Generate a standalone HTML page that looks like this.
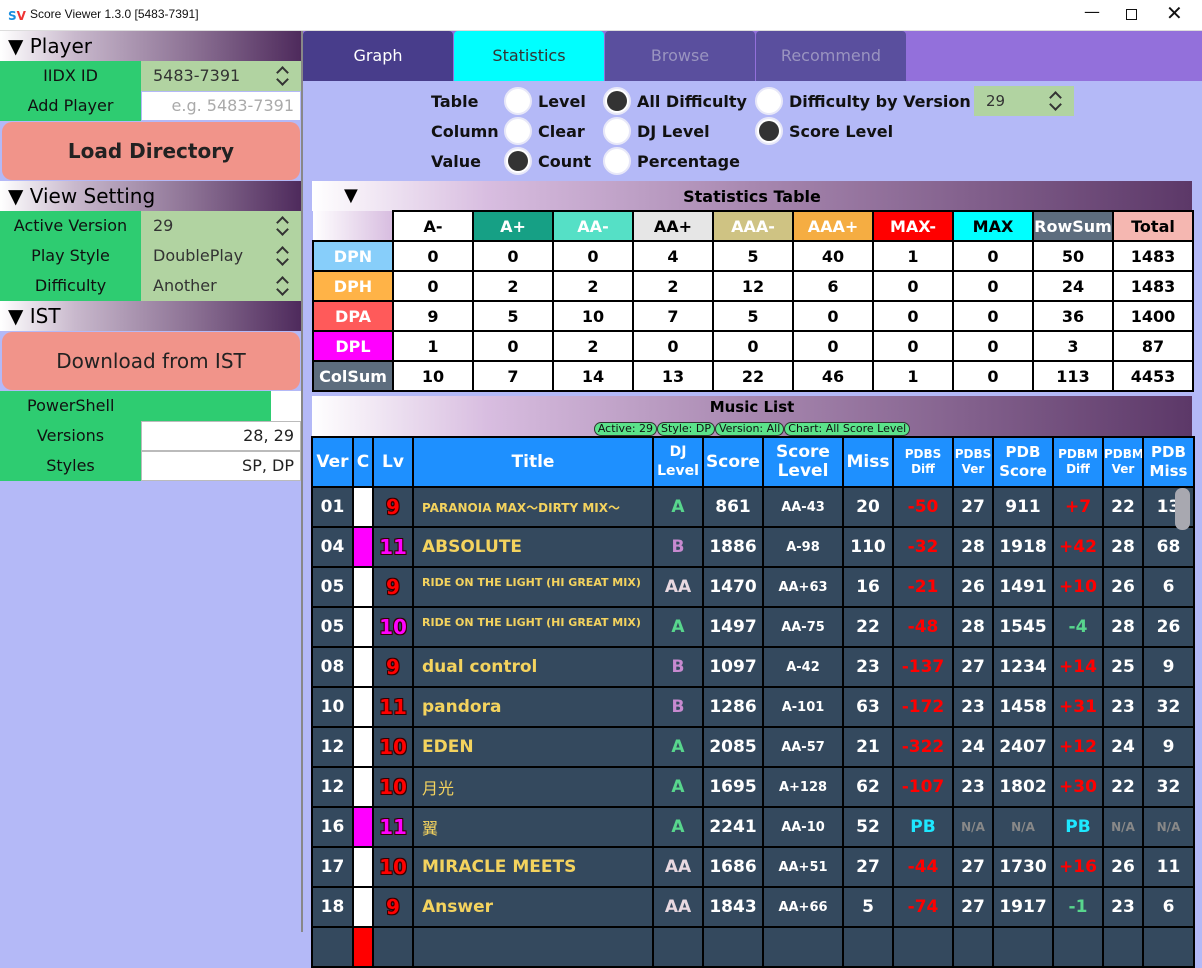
<!DOCTYPE html>
<html><head><meta charset="utf-8"><style>
*{box-sizing:border-box;margin:0;padding:0}
body{width:1202px;height:932px;overflow:hidden;background:#b4b9f7;font-family:"DejaVu Sans","Liberation Sans","Noto Sans CJK JP",sans-serif;position:relative}
.a{position:absolute}
.tb{left:0;top:0;width:1202px;height:31px;background:#fff;border-bottom:1px solid #ddd}
.hd{height:30px;background:linear-gradient(90deg,#fff 0%,#c8b8cc 25%,#8a6f92 65%,#4e2a5c 100%);font-size:20px;line-height:30px;padding-left:8px;color:#000}
.lab{background:#2ecc71;font-size:16px;color:#111;text-align:center;line-height:30px;height:30px}
.val{background:#b1d3a1;font-size:16px;color:#333;line-height:30px;height:30px;padding-left:12px}
.spin{position:absolute;right:12px;top:4px;width:14px;height:22px}
.spin::before,.spin::after{content:"";position:absolute;left:3px;width:7px;height:7px;border-left:2px solid #333;border-top:2px solid #333}
.spin::before{top:3px;transform:rotate(45deg)}
.spin::after{top:10px;transform:rotate(225deg)}
.btn{background:#f1948a;border-radius:10px;text-align:center;color:#222}
.tab{top:31px;height:50px;width:150px;text-align:center;line-height:50px;font-size:16px;border-radius:4px 4px 0 0}
.rl{font-size:16px;font-weight:bold;color:#111}
.rad{width:28px;height:28px;border-radius:50%;background:#fff;border:2px solid #e8e8f8}
.rad.on::after{content:"";position:absolute;left:2px;top:2px;width:20px;height:20px;border-radius:50%;background:#333}
table{border-collapse:collapse;table-layout:fixed}
.st td{border:2px solid #000;height:30px;text-align:center;font-weight:bold;font-size:16px;background:#fff;color:#000;padding:0}
.st .h td{color:#fff}
.ml td{border:2px solid #000;text-align:center;font-weight:bold;font-size:17px;color:#fff;background:#34495e;height:40px;padding:0;white-space:nowrap;overflow:hidden}
.ml tr.h td{background:#1e90ff;height:50px;line-height:19px}
.ml td.t{text-align:left;padding-left:8px;color:#f4d35e}
.ml td.lv{text-shadow:-1px -1px 0 #300,1px -1px 0 #300,-1px 1px 0 #300,1px 1px 0 #300;font-size:20px}
.ml td.r{color:#f00}.ml td.m{color:#f0f}.ml td.g{color:#58d68d}.ml td.p{color:#c88ad0}.ml td.w2{color:#e8d8e0}.ml td.cy{color:#1ee8ff}.ml td.na{color:#888;font-size:12px}
.ml td.sl{font-size:13px}
.chip{display:inline-block;background:#5be38a;border:1px solid #333;border-radius:7px;font-size:11px;line-height:12px;padding:0 3px;color:#111}
</style></head><body>
<div class="a tb">
 <div class="a" style="left:8px;top:7px;width:18px;height:18px;font-size:12px;font-weight:bold;color:#1a8fe0;line-height:18px">S<span style="color:#e33">V</span></div>
 <div class="a" style="left:30px;top:7px;font-size:12px;font-family:'Liberation Sans',sans-serif;color:#111">Score Viewer 1.3.0 [5483-7391]</div>
 <div class="a" style="left:1084px;top:2px;font-size:16px;color:#111">&#8212;</div>
 <div class="a" style="left:1126px;top:9px;width:11px;height:11px;border:1px solid #111"></div>
 <div class="a" style="left:1166px;top:1px;font-size:20px;color:#111">&#10005;</div>
</div>
<div class="a" style="left:301px;top:31px;width:2px;height:901px;background:#888"></div>
<div class="a hd" style="left:0;top:31px;width:301px">&#9660; Player</div>
<div class="a lab" style="left:0;top:61px;width:141px">IIDX ID</div>
<div class="a val" style="left:141px;top:61px;width:160px">5483-7391<div class="spin"></div></div>
<div class="a lab" style="left:0;top:91px;width:141px">Add Player</div>
<div class="a" style="left:142px;top:92px;width:158px;height:28px;background:#fff;font-size:16px;color:#aaa;text-align:right;padding-right:6px;line-height:28px">e.g. 5483-7391</div>
<div class="a btn" style="left:2px;top:122px;width:298px;height:58px;font-size:20px;font-weight:bold;line-height:58px">Load Directory</div>
<div class="a hd" style="left:0;top:181px;width:301px">&#9660; View Setting</div>
<div class="a lab" style="left:0;top:211px;width:141px">Active Version</div>
<div class="a val" style="left:141px;top:211px;width:160px">29<div class="spin"></div></div>
<div class="a lab" style="left:0;top:241px;width:141px">Play Style</div>
<div class="a val" style="left:141px;top:241px;width:160px">DoublePlay<div class="spin"></div></div>
<div class="a lab" style="left:0;top:271px;width:141px">Difficulty</div>
<div class="a val" style="left:141px;top:271px;width:160px">Another<div class="spin"></div></div>
<div class="a hd" style="left:0;top:301px;width:301px">&#9660; IST</div>
<div class="a btn" style="left:2px;top:332px;width:298px;height:58px;font-size:20px;line-height:58px">Download from IST</div>
<div class="a lab" style="left:0;top:391px;width:271px;text-align:left;padding-left:27px">PowerShell</div>
<div class="a" style="left:271px;top:391px;width:30px;height:30px;background:#fff"></div>
<div class="a lab" style="left:0;top:421px;width:141px">Versions</div>
<div class="a" style="left:141px;top:421px;width:160px;height:30px;background:#fff;border:1px solid #bbb;font-size:16px;text-align:right;padding-right:6px;line-height:28px;color:#222">28, 29</div>
<div class="a lab" style="left:0;top:451px;width:141px">Styles</div>
<div class="a" style="left:141px;top:451px;width:160px;height:30px;background:#fff;border:1px solid #bbb;font-size:16px;text-align:right;padding-right:6px;line-height:28px;color:#222">SP, DP</div>
<div class="a" style="left:303px;top:31px;width:899px;height:50px;background:#9370db"></div>
<div class="a tab" style="left:303px;background:#483d8b;color:#fff">Graph</div>
<div class="a tab" style="left:454px;background:#00ffff;color:#333">Statistics</div>
<div class="a tab" style="left:605px;background:#5a4f9e;color:#9a94c0">Browse</div>
<div class="a tab" style="left:756px;background:#5a4f9e;color:#9a94c0">Recommend</div>
<div class="a rl" style="left:431px;top:92px">Table</div>
<div class="a rl" style="left:431px;top:122px">Column</div>
<div class="a rl" style="left:431px;top:152px">Value</div>
<div class="a rad" style="left:504px;top:87px"></div><div class="a rl" style="left:538px;top:92px">Level</div>
<div class="a rad on" style="left:603px;top:87px"></div><div class="a rl" style="left:637px;top:92px">All Difficulty</div>
<div class="a rad" style="left:755px;top:87px"></div><div class="a rl" style="left:789px;top:92px">Difficulty by Version</div>
<div class="a val" style="left:974px;top:86px;width:100px;height:30px;font-size:15px">29<div class="spin"></div></div>
<div class="a rad" style="left:504px;top:117px"></div><div class="a rl" style="left:538px;top:122px">Clear</div>
<div class="a rad" style="left:603px;top:117px"></div><div class="a rl" style="left:637px;top:122px">DJ Level</div>
<div class="a rad on" style="left:755px;top:117px"></div><div class="a rl" style="left:789px;top:122px">Score Level</div>
<div class="a rad on" style="left:504px;top:147px"></div><div class="a rl" style="left:538px;top:152px">Count</div>
<div class="a rad" style="left:603px;top:147px"></div><div class="a rl" style="left:637px;top:152px">Percentage</div>
<div class="a" style="left:312px;top:181px;width:880px;height:30px;background:linear-gradient(90deg,#fff 0%,#d8bde0 20%,#a888b0 50%,#5c3868 100%)">
 <div class="a" style="left:32px;top:4px;font-size:18px">&#9660;</div>
 <div class="a" style="left:0;width:880px;text-align:center;top:6px;font-size:16px;font-weight:bold">Statistics Table</div>
</div>
<table class="a st" style="left:312px;top:210px;width:880px">
<col span="11" style="width:80px">
<tr class="h"><td style="background:linear-gradient(90deg,#fff,#d8bde0);border-top:none;border-left:none"></td><td style="color:#000">A-</td><td style="background:#16a085">A+</td><td style="background:#55e0c6">AA-</td><td style="background:#e6e6e6;color:#000">AA+</td><td style="background:#cfc383">AAA-</td><td style="background:#f5ad42">AAA+</td><td style="background:#f00">MAX-</td><td style="background:#0ff;color:#000">MAX</td><td style="background:#5d6d7e">RowSum</td><td style="background:#f5b7b1;color:#000">Total</td></tr>
<tr><td style="background:#87cefa;color:#fff">DPN</td><td>0</td><td>0</td><td>0</td><td>4</td><td>5</td><td>40</td><td>1</td><td>0</td><td>50</td><td>1483</td></tr>
<tr><td style="background:#ffb347;color:#fff">DPH</td><td>0</td><td>2</td><td>2</td><td>2</td><td>12</td><td>6</td><td>0</td><td>0</td><td>24</td><td>1483</td></tr>
<tr><td style="background:#ff5a5a;color:#fff">DPA</td><td>9</td><td>5</td><td>10</td><td>7</td><td>5</td><td>0</td><td>0</td><td>0</td><td>36</td><td>1400</td></tr>
<tr><td style="background:#f0f;color:#fff">DPL</td><td>1</td><td>0</td><td>2</td><td>0</td><td>0</td><td>0</td><td>0</td><td>0</td><td>3</td><td>87</td></tr>
<tr><td style="background:#5d6d7e;color:#fff">ColSum</td><td>10</td><td>7</td><td>14</td><td>13</td><td>22</td><td>46</td><td>1</td><td>0</td><td>113</td><td>4453</td></tr>
</table>
<div class="a" style="left:312px;top:396px;width:880px;height:41px;background:linear-gradient(90deg,#fff 0%,#d8bde0 20%,#a888b0 50%,#5c3868 100%)">
 <div class="a" style="left:0;width:880px;text-align:center;top:2px;font-size:15px;font-weight:bold">Music List</div>
 <div class="a" style="left:0;width:880px;text-align:center;top:26px;font-size:0"><span class="chip">Active: 29</span><span class="chip">Style: DP</span><span class="chip">Version: All</span><span class="chip">Chart: All Score Level</span></div>
</div>
<table class="a ml" style="left:311px;top:436px;width:882px">
<col style="width:41px"><col style="width:20px"><col style="width:40px"><col style="width:240px"><col style="width:50px"><col style="width:60px"><col style="width:80px"><col style="width:50px"><col style="width:60px"><col style="width:40px"><col style="width:60px"><col style="width:50px"><col style="width:40px"><col style="width:51px">
<tr class="h"><td>Ver</td><td>C</td><td>Lv</td><td>Title</td><td style="font-size:14px">DJ<br>Level</td><td>Score</td><td>Score<br>Level</td><td>Miss</td><td style="font-size:12px;line-height:15px">PDBS<br>Diff</td><td style="font-size:12px;line-height:15px">PDBS<br>Ver</td><td style="font-size:15px">PDB<br>Score</td><td style="font-size:12px;line-height:15px">PDBM<br>Diff</td><td style="font-size:12px;line-height:15px">PDBM<br>Ver</td><td style="font-size:15px">PDB<br>Miss</td></tr>
<tr><td>01</td><td style="background:#fff"></td><td class="lv r">9</td><td class="t" style="font-size:12px">PARANOIA MAX～DIRTY MIX～</td><td class="g">A</td><td>861</td><td class="sl">AA-43</td><td>20</td><td class="r">-50</td><td>27</td><td>911</td><td class="r">+7</td><td>22</td><td>13</td></tr>
<tr><td>04</td><td style="background:#f0f"></td><td class="lv m">11</td><td class="t">ABSOLUTE</td><td class="p">B</td><td>1886</td><td class="sl">A-98</td><td>110</td><td class="r">-32</td><td>28</td><td>1918</td><td class="r">+42</td><td>28</td><td>68</td></tr>
<tr><td>05</td><td style="background:#fff"></td><td class="lv r">9</td><td class="t" style="font-size:11px;vertical-align:top;padding-top:8px">RIDE ON THE LIGHT (HI GREAT MIX)</td><td class="w2">AA</td><td>1470</td><td class="sl">AA+63</td><td>16</td><td class="r">-21</td><td>26</td><td>1491</td><td class="r">+10</td><td>26</td><td>6</td></tr>
<tr><td>05</td><td style="background:#fff"></td><td class="lv m">10</td><td class="t" style="font-size:11px;vertical-align:top;padding-top:8px">RIDE ON THE LIGHT (HI GREAT MIX)</td><td class="g">A</td><td>1497</td><td class="sl">AA-75</td><td>22</td><td class="r">-48</td><td>28</td><td>1545</td><td class="g">-4</td><td>28</td><td>26</td></tr>
<tr><td>08</td><td style="background:#fff"></td><td class="lv r">9</td><td class="t">dual control</td><td class="p">B</td><td>1097</td><td class="sl">A-42</td><td>23</td><td class="r">-137</td><td>27</td><td>1234</td><td class="r">+14</td><td>25</td><td>9</td></tr>
<tr><td>10</td><td style="background:#fff"></td><td class="lv r">11</td><td class="t">pandora</td><td class="p">B</td><td>1286</td><td class="sl">A-101</td><td>63</td><td class="r">-172</td><td>23</td><td>1458</td><td class="r">+31</td><td>23</td><td>32</td></tr>
<tr><td>12</td><td style="background:#fff"></td><td class="lv r">10</td><td class="t">EDEN</td><td class="g">A</td><td>2085</td><td class="sl">AA-57</td><td>21</td><td class="r">-322</td><td>24</td><td>2407</td><td class="r">+12</td><td>24</td><td>9</td></tr>
<tr><td>12</td><td style="background:#fff"></td><td class="lv r">10</td><td class="t" style="font-weight:normal;font-size:16px">月光</td><td class="g">A</td><td>1695</td><td class="sl">A+128</td><td>62</td><td class="r">-107</td><td>23</td><td>1802</td><td class="r">+30</td><td>22</td><td>32</td></tr>
<tr><td>16</td><td style="background:#f0f"></td><td class="lv m">11</td><td class="t" style="font-weight:normal;font-size:16px">翼</td><td class="g">A</td><td>2241</td><td class="sl">AA-10</td><td>52</td><td class="cy">PB</td><td class="na">N/A</td><td class="na">N/A</td><td class="cy">PB</td><td class="na">N/A</td><td class="na">N/A</td></tr>
<tr><td>17</td><td style="background:#fff"></td><td class="lv r">10</td><td class="t">MIRACLE MEETS</td><td class="w2">AA</td><td>1686</td><td class="sl">AA+51</td><td>27</td><td class="r">-44</td><td>27</td><td>1730</td><td class="r">+16</td><td>26</td><td>11</td></tr>
<tr><td>18</td><td style="background:#fff"></td><td class="lv r">9</td><td class="t">Answer</td><td class="w2">AA</td><td>1843</td><td class="sl">AA+66</td><td>5</td><td class="r">-74</td><td>27</td><td>1917</td><td class="g">-1</td><td>23</td><td>6</td></tr>
<tr><td></td><td style="background:#f00"></td><td></td><td></td><td></td><td></td><td></td><td></td><td></td><td></td><td></td><td></td><td></td><td></td></tr>
</table>
<div class="a" style="left:1175px;top:488px;width:15px;height:42px;background:#a8a8b0;border-radius:7px"></div>
</body></html>
